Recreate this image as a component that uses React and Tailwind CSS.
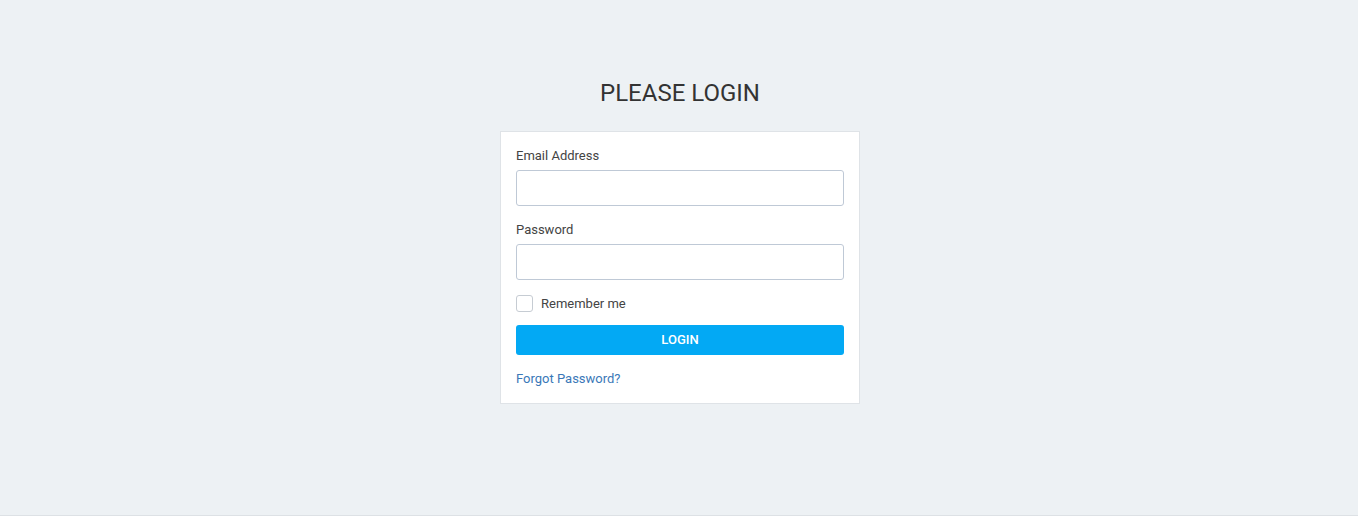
import React from 'react'

function App() {
  return (
    <div className="min-h-[516px] bg-[#edf1f4] border-b border-[#dde1e5] font-['Roboto',sans-serif] flex flex-col items-center pt-[77px] pl-[2px]">
      {/* Title */}
      <h1 className="text-[24px] leading-[32px] text-[#333] font-normal">PLEASE LOGIN</h1>

      {/* Card */}
      <form className="mt-[22px] w-[360px] bg-white border border-[#dfe3e7] px-[15px] pt-[15px] pb-[16px]">
        <label className="block text-[13px] leading-[17px] text-[#444] mb-[6px]">Email Address</label>
        <input
          type="email"
          className="block w-full h-[36px] rounded-[3px] border border-[#bfc9d6] px-3 text-[13px] outline-none"
        />

        <label className="block text-[13px] leading-[17px] text-[#444] mt-[15px] mb-[6px]">Password</label>
        <input
          type="password"
          className="block w-full h-[36px] rounded-[3px] border border-[#bfc9d6] px-3 text-[13px] outline-none"
        />

        <div className="flex items-center gap-[8px] mt-[15px]">
          <span className="w-[17px] h-[17px] rounded-[3px] border border-[#c6ccd3] bg-white" />
          <span className="text-[13px] leading-[17px] text-[#444]">Remember me</span>
        </div>

        <button
          type="button"
          className="block w-full h-[30px] mt-[13px] rounded-[3px] bg-[#03a9f4] text-white text-[13px] font-medium"
        >
          LOGIN
        </button>

        <a href="#" className="block mt-[15px] text-[13px] leading-[17px] text-[#3a78b8]">
          Forgot Password?
        </a>
      </form>
    </div>
  )
}

export default App
